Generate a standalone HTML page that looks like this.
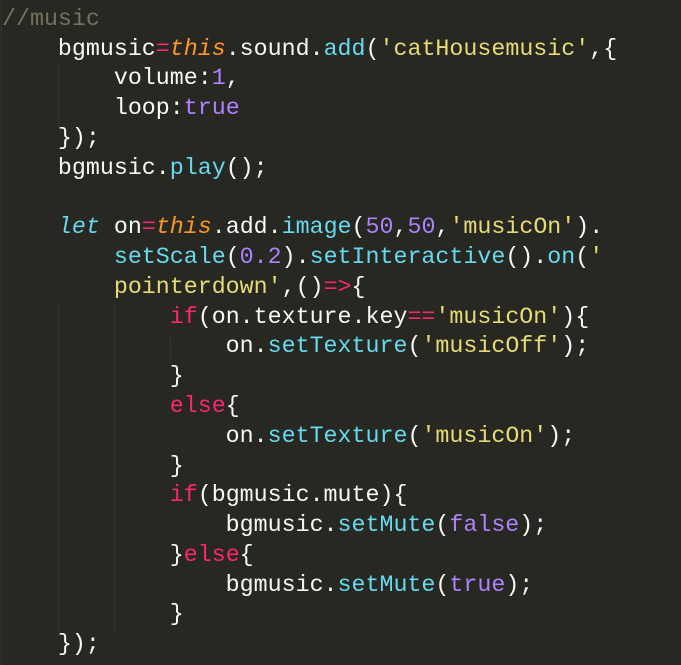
<!DOCTYPE html>
<html><head><meta charset="utf-8"><style>
html,body{margin:0;padding:0;background:#272822;width:681px;height:665px;overflow:hidden}
pre{position:absolute;left:2px;top:-25px;margin:0;font-family:"Liberation Mono",monospace;font-size:23.3px;line-height:29.78px;color:#f8f8f2}
.c{color:#75715e}.k{color:#f92672}.t{color:#fd971f;font-style:italic}.f{color:#66d9ef}.n{color:#ae81ff}.s{color:#e6db74}.l{color:#66d9ef;font-style:italic}
.g{position:absolute;width:0;border-left:1px dotted #3e3d32}
</style></head><body>
<div class="g" style="left:1px;top:0;height:665px"></div>
<div class="g" style="left:58px;top:66px;height:60px"></div>
<div class="g" style="left:58px;top:306px;height:330px"></div>
<div class="g" style="left:114px;top:306px;height:330px"></div>
<div class="g" style="left:170px;top:336px;height:30px"></div>
<pre>    });
<span class="c">//music</span>
    bgmusic<span class="k">=</span><span class="t">this</span>.sound.<span class="f">add</span>(<span class="s">'catHousemusic'</span>,{
        volume:<span class="n">1</span>,
        loop:<span class="n">true</span>
    });
    bgmusic.<span class="f">play</span>();

    <span class="l">let</span> on<span class="k">=</span><span class="t">this</span>.add.<span class="f">image</span>(<span class="n">50</span>,<span class="n">50</span>,<span class="s">'musicOn'</span>).
        <span class="f">setScale</span>(<span class="n">0.2</span>).<span class="f">setInteractive</span>().<span class="f">on</span>(<span class="s">'</span>
        <span class="s">pointerdown'</span>,()<span class="k">=&gt;</span>{
            <span class="k">if</span>(on.texture.key<span class="k">==</span><span class="s">'musicOn'</span>){
                on.<span class="f">setTexture</span>(<span class="s">'musicOff'</span>);
            }
            <span class="k">else</span>{
                on.<span class="f">setTexture</span>(<span class="s">'musicOn'</span>);
            }
            <span class="k">if</span>(bgmusic.mute){
                bgmusic.<span class="f">setMute</span>(<span class="n">false</span>);
            }<span class="k">else</span>{
                bgmusic.<span class="f">setMute</span>(<span class="n">true</span>);
            }
    });</pre>
</body></html>
